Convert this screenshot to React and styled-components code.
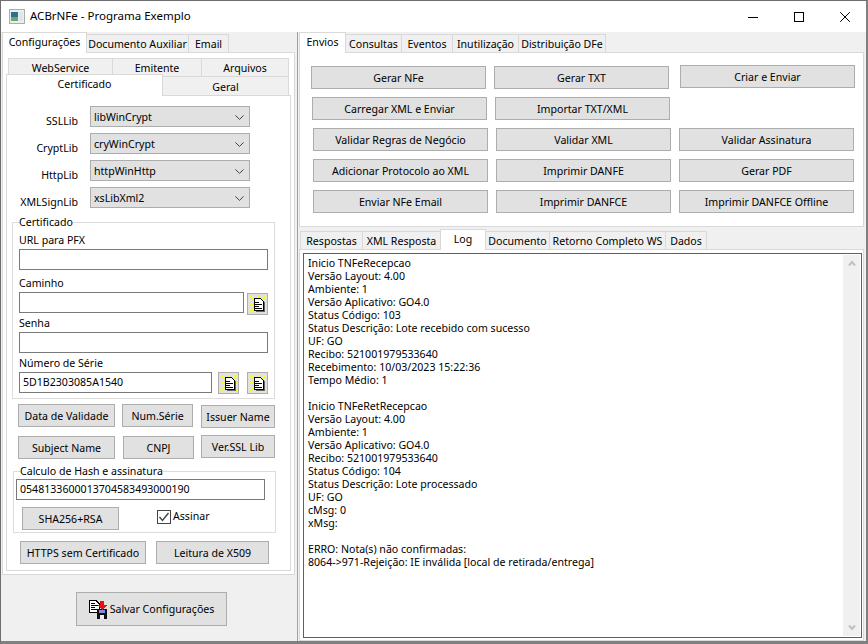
import React from 'react';
import styled, { createGlobalStyle } from 'styled-components';

const FONT = '"Noto Sans", "DejaVu Sans", sans-serif';

const logText = `Inicio TNFeRecepcao
Versão Layout: 4.00
Ambiente: 1
Versão Aplicativo: GO4.0
Status Código: 103
Status Descrição: Lote recebido com sucesso
UF: GO
Recibo: 521001979533640
Recebimento: 10/03/2023 15:22:36
Tempo Médio: 1

Inicio TNFeRetRecepcao
Versão Layout: 4.00
Ambiente: 1
Versão Aplicativo: GO4.0
Recibo: 521001979533640
Status Código: 104
Status Descrição: Lote processado
UF: GO
cMsg: 0
xMsg:

ERRO: Nota(s) não confirmadas:
8064->971-Rejeição: IE inválida [local de retirada/entrega]`;

const libs = [
    { label: 'SSLLib', value: 'libWinCrypt' },
    { label: 'CryptLib', value: 'cryWinCrypt' },
    { label: 'HttpLib', value: 'httpWinHttp' },
    { label: 'XMLSignLib', value: 'xsLibXml2' },
];

const TitleIcon = () => (
    <svg width="16" height="15" viewBox="0 0 16 15">
        <rect x="0.5" y="0.5" width="15" height="14" fill="#eceff0" stroke="#a9adb0" />
        <rect x="2" y="3" width="7" height="5" fill="#2f6f8f" />
        <rect x="2" y="8" width="7" height="4" fill="#6fa57a" />
        <rect x="10" y="3" width="4" height="9" fill="#dfe7e4" />
    </svg>
);

const MinimizeIcon = () => (
    <svg width="10" height="10" viewBox="0 0 10 10">
        <path d="M0 5.5H10" stroke="#000" fill="none" />
    </svg>
);

const MaximizeIcon = () => (
    <svg width="10" height="10" viewBox="0 0 10 10">
        <rect x="0.5" y="0.5" width="9" height="9" stroke="#000" fill="none" />
    </svg>
);

const CloseIcon = () => (
    <svg width="10" height="10" viewBox="0 0 10 10">
        <path d="M0.2 0.2L9.8 9.8M9.8 0.2L0.2 9.8" stroke="#000" fill="none" />
    </svg>
);

const ChevronDown = () => (
    <svg width="9" height="5" viewBox="0 0 9 5">
        <path d="M0.4 0.4L4.5 4.4L8.6 0.4" stroke="#444" fill="none" />
    </svg>
);

const DocIcon = () => (
    <svg width="18" height="18" viewBox="0 0 18 18">
        <path d="M1 1L17 17M17 1L1 17M1 9H17M9 1V17" stroke="#ffff00" strokeWidth="1.7" />
        <g shapeRendering="crispEdges">
            <path d="M5 3H11L14 6V15H5Z" fill="#fff" stroke="#000" />
            <path d="M15 7V16H7" stroke="#666" fill="none" />
            <path d="M6 7H10M6 9H13M6 11H10M6 13H13" stroke="#000" />
        </g>
    </svg>
);

const SaveIcon = () => (
    <svg width="18" height="19" viewBox="0 0 18 19" shapeRendering="crispEdges">
        <path d="M0.5 0.5H7L10.5 4V12.5H0.5Z" fill="#fff" stroke="#000" />
        <path d="M2 3H6M2 5H9M2 7H6M2 9H9" stroke="#000" />
        <rect x="8" y="9" width="10" height="10" fill="#111" />
        <rect x="10" y="10" width="6" height="3" fill="#7d8fe8" />
        <rect x="11" y="15" width="4" height="4" fill="#eee" />
        <rect x="11" y="1" width="4" height="4" fill="#e81010" />
        <path d="M8 5H18L13 10Z" fill="#e81010" />
    </svg>
);

const ArrowUp = () => (
    <svg width="8" height="7" viewBox="0 0 8 7">
        <path d="M1 5.5L4 2L7 5.5" stroke="#c0c0c0" strokeWidth="2" fill="none" />
    </svg>
);

const ArrowDown = () => (
    <svg width="8" height="7" viewBox="0 0 8 7">
        <path d="M1 1.5L4 5L7 1.5" stroke="#c0c0c0" strokeWidth="2" fill="none" />
    </svg>
);

const App = () => {
    return (
        <>
            <GlobalStyle />
            <Window>
                <TitleBar>
                    <TitleIcon />
                    <TitleText>ACBrNFe - Programa Exemplo</TitleText>
                    <WindowControls>
                        <WindowButton><MinimizeIcon /></WindowButton>
                        <WindowButton><MaximizeIcon /></WindowButton>
                        <WindowButton><CloseIcon /></WindowButton>
                    </WindowControls>
                </TitleBar>

                <Body>
                    <LeftPanel>
                        <TabStrip>
                            <Tab $active $w={85} $h={21}>Configurações</Tab>
                            <Tab $w={103}>Documento Auxiliar</Tab>
                            <Tab $w={41}>Email</Tab>
                        </TabStrip>
                        <OuterPane>
                            <SubTabRow>
                                <Tab $w={105}>WebService</Tab>
                                <Tab $w={90}>Emitente</Tab>
                                <Tab $w={88}>Arquivos</Tab>
                            </SubTabRow>
                            <SubTabActiveRow>
                                <Tab $active $w={157} $h={22}>Certificado</Tab>
                                <Tab $w={127} $h={19}>Geral</Tab>
                            </SubTabActiveRow>
                            <InnerPane>
                                <LibList>
                                    {libs.map((lib) => (
                                        <LibRow key={lib.label}>
                                            <LibLabel>{lib.label}</LibLabel>
                                            <Combo>
                                                {lib.value}
                                                <ChevronDown />
                                            </Combo>
                                        </LibRow>
                                    ))}
                                </LibList>

                                <Group $top={8}>
                                    <GroupTitle>Certificado</GroupTitle>
                                    <FieldLabel $top={5}>URL para PFX</FieldLabel>
                                    <Input $w={249} />
                                    <FieldLabel $top={7}>Caminho</FieldLabel>
                                    <InputRow>
                                        <Input $w={225} />
                                        <IconButton $top={1} $left={3}><DocIcon /></IconButton>
                                    </InputRow>
                                    <FieldLabel $top={4}>Senha</FieldLabel>
                                    <Input $w={249} />
                                    <FieldLabel $top={4}>Número de Série</FieldLabel>
                                    <InputRow>
                                        <Input $w={193}>5D1B2303085A1540</Input>
                                        <IconButton $left={6}><DocIcon /></IconButton>
                                        <IconButton $left={8}><DocIcon /></IconButton>
                                    </InputRow>
                                </Group>

                                <ActionRow $top={5} $left={6}>
                                    <Button $w={97}>Data de Validade</Button>
                                    <Button $w={71} $left={7}>Num.Série</Button>
                                    <Button $w={74} $left={8} $top={1}>Issuer Name</Button>
                                </ActionRow>
                                <ActionRow $top={7} $left={6}>
                                    <Button $w={97} $top={1}>Subject Name</Button>
                                    <Button $w={71} $left={8} $top={1}>CNPJ</Button>
                                    <Button $w={74} $left={7}>Ver.SSL Lib</Button>
                                </ActionRow>

                                <HashGroup $top={6}>
                                    <GroupTitle>Calculo de Hash e assinatura</GroupTitle>
                                    <Input $w={249} $top={1}>0548133600013704583493000190</Input>
                                    <ActionRow $top={7} $left={6}>
                                        <Button $w={97}>SHA256+RSA</Button>
                                        <CheckLabel>
                                            <CheckBox>
                                                <svg width="12" height="12" viewBox="0 0 12 12">
                                                    <path d="M1.5 6L4.5 9.5L10.5 2" stroke="#444" strokeWidth="1.4" fill="none" />
                                                </svg>
                                            </CheckBox>
                                            Assinar
                                        </CheckLabel>
                                    </ActionRow>
                                </HashGroup>

                                <ActionRow $top={8} $left={8}>
                                    <Button $w={126}>HTTPS sem Certificado</Button>
                                    <Button $w={113} $left={10}>Leitura de X509</Button>
                                </ActionRow>
                            </InnerPane>
                        </OuterPane>
                        <SaveArea>
                            <SaveButton>
                                <SaveIcon />
                                Salvar Configurações
                            </SaveButton>
                        </SaveArea>
                    </LeftPanel>

                    <Splitter />

                    <RightPanel>
                        <TabStrip>
                            <Tab $active $w={47} $h={21}>Envios</Tab>
                            <Tab $w={57}>Consultas</Tab>
                            <Tab $w={52}>Eventos</Tab>
                            <Tab $w={67}>Inutilização</Tab>
                            <Tab $w={88}>Distribuição DFe</Tab>
                        </TabStrip>
                        <ActionsPane>
                            <ButtonGrid $left={11} $gap={8}>
                                <Button $w={175} $top={1}>Gerar NFe</Button>
                                <Button $w={175} $top={1}>Gerar TXT</Button>
                                <Button $w={175} $left={3}>Criar e Enviar</Button>
                            </ButtonGrid>
                            <ButtonGrid $left={12} $gap={8}>
                                <Button $w={175}>Carregar XML e Enviar</Button>
                                <Button $w={175}>Importar TXT/XML</Button>
                            </ButtonGrid>
                            <ButtonGrid $left={13} $gap={8}>
                                <Button $w={175}>Validar Regras de Negócio</Button>
                                <Button $w={175}>Validar XML</Button>
                                <Button $w={175}>Validar Assinatura</Button>
                            </ButtonGrid>
                            <ButtonGrid $left={13} $gap={8}>
                                <Button $w={175}>Adicionar Protocolo ao XML</Button>
                                <Button $w={175}>Imprimir DANFE</Button>
                                <Button $w={175}>Gerar PDF</Button>
                            </ButtonGrid>
                            <ButtonGrid $left={13} $gap={8}>
                                <Button $w={175}>Enviar NFe Email</Button>
                                <Button $w={175}>Imprimir DANFCE</Button>
                                <Button $w={175}>Imprimir DANFCE Offline</Button>
                            </ButtonGrid>
                        </ActionsPane>

                        <LowerStrip>
                            <Tab $w={63}>Respostas</Tab>
                            <Tab $w={79}>XML Resposta</Tab>
                            <Tab $active $w={46} $h={21}>Log</Tab>
                            <Tab $w={65}>Documento</Tab>
                            <Tab $w={117}>Retorno Completo WS</Tab>
                            <Tab $w={42}>Dados</Tab>
                        </LowerStrip>
                        <LogPane>
                            <Memo>
                                <MemoText>{logText}</MemoText>
                                <ScrollBar>
                                    <ArrowUp />
                                    <ArrowDown />
                                </ScrollBar>
                            </Memo>
                        </LogPane>
                    </RightPanel>
                </Body>
            </Window>
        </>
    );
};

export default App;


const GlobalStyle = createGlobalStyle`
    * {
        box-sizing: border-box;
    }

    body {
        margin: 0;
        background: #f0f0f0;
        font-family: ${FONT};
        font-size: 10.6px;
        line-height: 13px;
        color: #000;
    }
`;

const Window = styled.div`
    width: 868px;
    height: 644px;
    display: flex;
    flex-direction: column;
    overflow: hidden;
    background: #f0f0f0;
    border-top: 1px solid #6e6e6e;
    border-left: 1px solid #6e6e6e;
    border-right: 2px solid #808080;
    border-bottom: 3px solid #808080;
`;

const TitleBar = styled.div`
    height: 31px;
    flex: none;
    display: flex;
    align-items: center;
    background: #fff;
    padding-left: 8px;
`;

const TitleText = styled.span`
    margin-left: 5px;
    margin-top: -2px;
    font-size: 11.5px;
`;

const WindowControls = styled.div`
    margin-left: auto;
    margin-right: -2px;
    display: flex;
`;

const WindowButton = styled.div`
    width: 46px;
    height: 30px;
    display: flex;
    align-items: center;
    justify-content: center;
`;

const Body = styled.div`
    flex: 1;
    display: flex;
    min-height: 0;
`;

const LeftPanel = styled.div`
    width: 295px;
    flex: none;
    padding-left: 1px;
    display: flex;
    flex-direction: column;
`;

const Splitter = styled.div`
    width: 1px;
    margin: 0 1px;
    flex: none;
    background: #a0a0a0;
`;

const RightPanel = styled.div`
    width: 565px;
    flex: none;
    display: flex;
    flex-direction: column;
`;

const TabStrip = styled.div`
    height: 20px;
    flex: none;
    display: flex;
    align-items: flex-end;
`;

const LowerStrip = styled(TabStrip)`
    margin-top: 2px;
    padding-left: 1px;
`;

const SubTabRow = styled(TabStrip)`
    height: 18px;
    margin-left: 2px;
`;

const SubTabActiveRow = styled(TabStrip)`
    height: 19px;
`;

const Tab = styled.div`
    width: ${(p) => p.$w}px;
    height: ${(p) => p.$h || 18}px;
    flex: none;
    display: flex;
    align-items: center;
    justify-content: center;
    margin-right: -1px;
    white-space: nowrap;
    background: ${(p) => (p.$active ? '#fff' : '#f0f0f0')};
    border: 1px solid #d9d9d9;
    border-bottom: none;
    padding-top: 2px;
    ${(p) => p.$active && 'margin-bottom: -1px; z-index: 1; padding-top: 0; padding-bottom: 2px;'}
`;

const OuterPane = styled.div`
    width: 293px;
    height: 523px;
    flex: none;
    background: #fff;
    border: 1px solid #d9d9d9;
    padding: 5px 3px 3px;
`;

const InnerPane = styled.div`
    width: 285px;
    height: 476px;
    background: #fff;
    border: 1px solid #d9d9d9;
    padding: 10px 0 0 5px;
`;

const LibList = styled.div`
    display: flex;
    flex-direction: column;
    gap: 6px;
`;

const LibRow = styled.div`
    display: flex;
    height: 21px;
`;

const LibLabel = styled.div`
    width: 66px;
    padding-top: 9px;
    text-align: right;
    white-space: nowrap;
`;

const Combo = styled.div`
    width: 160px;
    height: 21px;
    margin-left: 12px;
    padding: 1px 5px 0 3px;
    display: flex;
    align-items: center;
    justify-content: space-between;
    background: #e1e1e1;
    border: 1px solid #adadad;
`;

const Group = styled.fieldset`
    width: 263px;
    margin: ${(p) => p.$top}px 0 0;
    padding: 0 6px 5px;
    border: 1px solid #dcdcdc;
    min-width: 0;
`;

const HashGroup = styled(Group)`
    margin-left: 1px;
    padding: 0 2px 2px;
`;

const GroupTitle = styled.legend`
    padding: 0;
    background: #fff;
    white-space: nowrap;
    ${HashGroup} > & {
        margin-left: 4px;
    }
`;

const FieldLabel = styled.div`
    margin-top: ${(p) => p.$top}px;
    margin-bottom: 2px;
`;

const Input = styled.div`
    width: ${(p) => p.$w}px;
    height: 21px;
    flex: none;
    margin-top: ${(p) => p.$top || 0}px;
    padding: 0 3px;
    display: flex;
    align-items: center;
    white-space: nowrap;
    background: #fff;
    border: 1px solid #7a7a7a;
`;

const InputRow = styled.div`
    display: flex;
    height: 21px;
`;

const IconButton = styled.div`
    width: 21px;
    height: 22px;
    flex: none;
    margin-top: ${(p) => p.$top || 0}px;
    margin-left: ${(p) => p.$left || 0}px;
    display: flex;
    align-items: center;
    justify-content: center;
    background: #e1e1e1;
    border: 1px solid #adadad;
`;

const ActionRow = styled.div`
    display: flex;
    margin-top: ${(p) => p.$top}px;
    margin-left: ${(p) => p.$left}px;
`;

const Button = styled.div`
    width: ${(p) => p.$w}px;
    height: 23px;
    flex: none;
    margin-top: ${(p) => p.$top || 0}px;
    margin-left: ${(p) => p.$left || 0}px;
    padding-top: 2px;
    display: flex;
    align-items: center;
    justify-content: center;
    white-space: nowrap;
    background: #e1e1e1;
    border: 1px solid #adadad;
`;

const CheckLabel = styled.div`
    margin-left: 38px;
    height: 19px;
    display: flex;
    align-items: center;
    gap: 2px;
`;

const CheckBox = styled.div`
    width: 14px;
    height: 14px;
    display: flex;
    align-items: center;
    justify-content: center;
    background: #fff;
    border: 1px solid #444;
`;

const SaveArea = styled.div`
    padding: 17px 0 0 74px;
`;

const SaveButton = styled.div`
    width: 151px;
    height: 34px;
    display: flex;
    align-items: center;
    justify-content: center;
    gap: 3px;
    background: #e1e1e1;
    border: 1px solid #adadad;
`;

const ActionsPane = styled.div`
    height: 175px;
    flex: none;
    background: #fff;
    border: 1px solid #d9d9d9;
    padding-top: 12px;
    display: flex;
    flex-direction: column;
    gap: 8px;
`;

const ButtonGrid = styled.div`
    display: flex;
    padding-left: ${(p) => p.$left}px;
    gap: ${(p) => p.$gap}px;
`;

const LogPane = styled.div`
    flex: 1;
    min-height: 0;
    background: #fff;
    border: 1px solid #d9d9d9;
    padding: 3px 1px 1px 3px;
`;

const Memo = styled.div`
    height: 385px;
    display: flex;
    background: #fff;
    border: 1px solid #0078d7;
`;

const MemoText = styled.div`
    flex: 1;
    padding: 3px 0 0 4px;
    white-space: pre;
`;

const ScrollBar = styled.div`
    width: 17px;
    margin: 1px 1px 1px 0;
    padding: 5px 0;
    display: flex;
    flex-direction: column;
    align-items: center;
    justify-content: space-between;
    background: #f0f0f0;
`;
